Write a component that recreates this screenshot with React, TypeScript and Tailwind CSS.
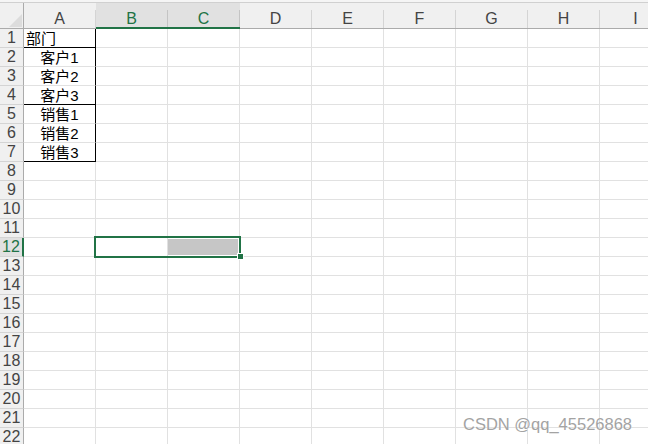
import React from 'react'

const COLS = ['A', 'B', 'C', 'D', 'E', 'F', 'G', 'H', 'I']
const ROWS = Array.from({ length: 22 }, (_, i) => i + 1)

const cellA: Record<number, { text: string; align: 'left' | 'center'; bottom: boolean }> = {
  1: { text: '部门', align: 'left', bottom: true },
  2: { text: '客户1', align: 'center', bottom: false },
  3: { text: '客户2', align: 'center', bottom: false },
  4: { text: '客户3', align: 'center', bottom: true },
  5: { text: '销售1', align: 'center', bottom: false },
  6: { text: '销售2', align: 'center', bottom: false },
  7: { text: '销售3', align: 'center', bottom: true },
}

function ColHeader(props: { letter: string }) {
  const sel = props.letter === 'B' || props.letter === 'C'
  if (sel) {
    return (
      <div className="w-[72px] shrink-0 h-[26px] flex flex-col bg-[#e1e1e1] border-b-2 border-[#217346]">
        <div className="h-[7px]" />
        <div className="flex-1 flex items-center justify-center border-r border-[#c4c4c4] text-[#217346] text-[16px]">
          {props.letter}
        </div>
      </div>
    )
  }
  return (
    <div className="w-[72px] shrink-0 h-[26px] flex flex-col bg-[#f0f0f0] border-b border-[#ababab]">
      <div className="h-[7px]" />
      <div className="flex-1 flex items-center justify-center border-r border-[#d4d4d4] text-[#444444] text-[16px]">
        {props.letter}
      </div>
    </div>
  )
}

function Row(props: { n: number }) {
  const { n } = props
  const sel = n === 12
  const a = cellA[n]
  return (
    <div className="flex h-[19px] shrink-0">
      {sel ? (
        <div className="w-[24px] shrink-0 flex items-center justify-center bg-[#e1e1e1] border-r-2 border-[#217346] border-b border-b-[#d4d4d4] text-[#217346] text-[16px]">
          {n}
        </div>
      ) : (
        <div className="w-[24px] shrink-0 flex items-center justify-center bg-[#f0f0f0] border-r border-[#ababab] border-b border-b-[#d4d4d4] text-[#444444] text-[16px]">
          {n}
        </div>
      )}
      {COLS.map((c) => {
        if (c === 'A' && a) {
          return (
            <div
              key={c}
              className={
                'w-[72px] shrink-0 flex items-center border-r border-r-black border-b text-black ' +
                (a.bottom ? 'border-b-black ' : 'border-b-[#e1e1e1] ') +
                (a.align === 'left' ? 'justify-start pl-[2px]' : 'justify-center')
              }
            >
              {a.text}
            </div>
          )
        }
        return <div key={c} className="w-[72px] shrink-0 border-r border-b border-[#e1e1e1]" />
      })}
    </div>
  )
}

export default function App() {
  return (
    <div
      className="relative w-[648px] h-[444px] overflow-hidden bg-white text-[15px] leading-none"
      style={{ fontFamily: '"Liberation Sans", "Noto Sans CJK SC", sans-serif' }}
    >
      <div className="h-[3px] bg-[#f5f5f5] border-b border-[#d0d0d0]" />
      <div className="flex">
        <div className="w-[24px] shrink-0 h-[26px] bg-[#f0f0f0] border-r border-b border-[#ababab] flex items-end justify-end pr-[1px] pb-[1px]">
          <svg width="13" height="13" viewBox="0 0 13 13">
            <polygon points="13,0 13,13 0,13" fill="#dcdcdc" />
          </svg>
        </div>
        {COLS.map((c) => (
          <ColHeader key={c} letter={c} />
        ))}
      </div>
      <div className="flex flex-col">
        {ROWS.map((n) => (
          <Row key={n} n={n} />
        ))}
      </div>

      {/* selection B12:C12 */}
      <div className="absolute left-[94px] top-[236px] w-[147px] h-[22px] border-2 border-[#217346]">
        <div className="absolute left-[72px] top-[1px] w-[70px] h-[16px] bg-[#c6c6c6]" />
      </div>
      <div className="absolute left-[237px] top-[253px] w-[7px] h-[7px] bg-[#217346] border border-white" />

      <div
        className="absolute left-[463px] top-[416px] text-[16.5px] text-[#a3a3a3] leading-none"
        style={{ fontFamily: '"Liberation Sans", sans-serif', textShadow: '0 0 1px #fff' }}
      >
        CSDN @qq_45526868
      </div>
    </div>
  )
}
